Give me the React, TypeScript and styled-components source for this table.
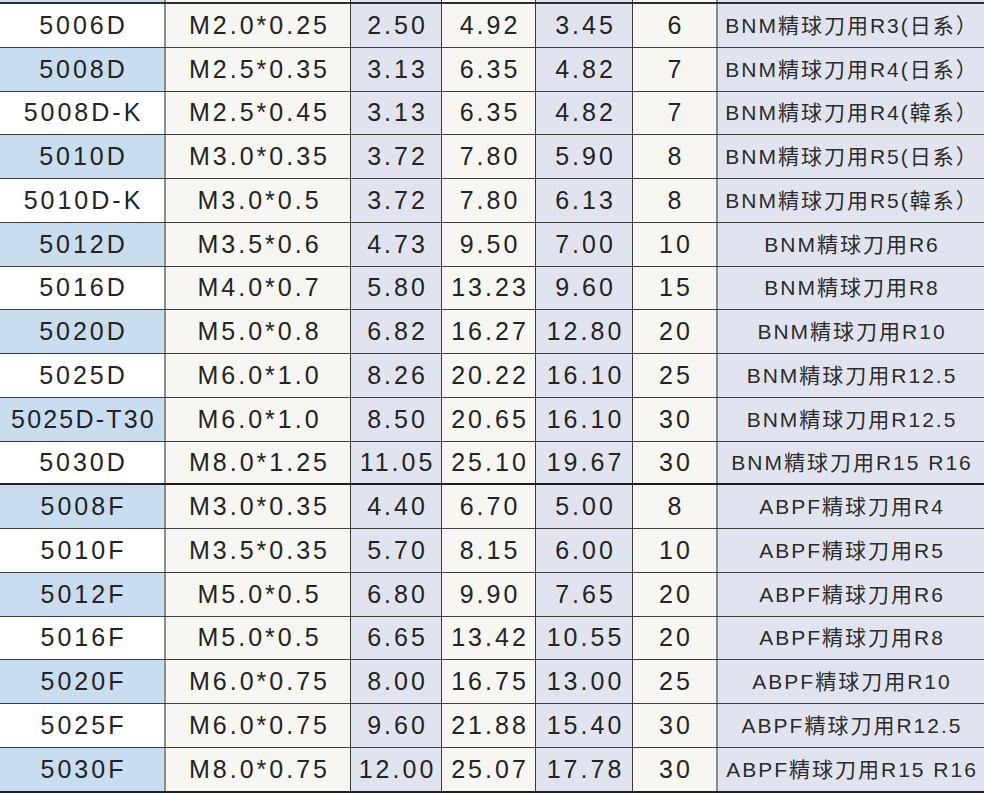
import React from "react";
import styled, { createGlobalStyle } from "styled-components";

const GlobalStyle = createGlobalStyle`
  html, body {
    margin: 0;
    padding: 0;
    background: #ffffff;
  }
  body {
    font-family: "Liberation Sans", Arial, "Noto Sans CJK TC", sans-serif;
  }
`;

type Kind = "model" | "light" | "tint" | "desc";

const COLUMNS = "164px 186px 91px 94px 97px 84px 268px";

const Sheet = styled.div`
  width: 984px;
  display: flex;
  flex-direction: column;
`;

const Body = styled.div`
  display: flex;
  flex-direction: column;
  border-top: 2px solid #2e2e2e;
`;

const Row = styled.div<{ $height: number; $border: "none" | "thin" | "thick" }>`
  display: grid;
  grid-template-columns: ${COLUMNS};
  box-sizing: border-box;
  height: ${(p) => p.$height}px;
  border-bottom: ${(p) =>
    p.$border === "none"
      ? "none"
      : p.$border === "thick"
      ? "2px solid #1f1f1f"
      : "1px solid #3e3e3e"};
`;

const background = (kind: Kind, blue: boolean) => {
  if (kind === "model") return blue ? "#c9ddf1" : "#ffffff";
  if (kind === "light") return "#f7f6f2";
  return "#e1e4ee";
};

const Cell = styled.div<{ $kind: Kind; $blue?: boolean; $edge: "none" | "gray" | "dark"; $tight?: boolean }>`
  display: flex;
  align-items: center;
  justify-content: center;
  box-sizing: border-box;
  min-width: 0;
  white-space: nowrap;
  background: ${(p) => background(p.$kind, !!p.$blue)};
  border-left: ${(p) =>
    p.$edge === "none" ? "none" : p.$edge === "gray" ? "2px solid #8c8c8c" : "1px solid #3a3a3a"};
  color: ${(p) => (p.$kind === "desc" ? "#2b2b2b" : "#232323")};
  font-family: "Liberation Sans", Arial, "Noto Sans CJK TC", sans-serif;
  font-size: ${(p) => (p.$kind === "desc" ? "21px" : "25px")};
  letter-spacing: ${(p) => (p.$kind === "desc" ? "2px" : p.$tight ? "2.2px" : "3px")};
  padding-left: ${(p) => (p.$kind === "desc" ? "2px" : "3px")};
  line-height: 1;
`;

type Item = [string, string, string, string, string, string, string];

const ROWS: Item[] = [
  ["5006D", "M2.0*0.25", "2.50", "4.92", "3.45", "6", "BNM精球刀用R3(日系）"],
  ["5008D", "M2.5*0.35", "3.13", "6.35", "4.82", "7", "BNM精球刀用R4(日系）"],
  ["5008D-K", "M2.5*0.45", "3.13", "6.35", "4.82", "7", "BNM精球刀用R4(韓系）"],
  ["5010D", "M3.0*0.35", "3.72", "7.80", "5.90", "8", "BNM精球刀用R5(日系）"],
  ["5010D-K", "M3.0*0.5", "3.72", "7.80", "6.13", "8", "BNM精球刀用R5(韓系）"],
  ["5012D", "M3.5*0.6", "4.73", "9.50", "7.00", "10", "BNM精球刀用R6"],
  ["5016D", "M4.0*0.7", "5.80", "13.23", "9.60", "15", "BNM精球刀用R8"],
  ["5020D", "M5.0*0.8", "6.82", "16.27", "12.80", "20", "BNM精球刀用R10"],
  ["5025D", "M6.0*1.0", "8.26", "20.22", "16.10", "25", "BNM精球刀用R12.5"],
  ["5025D-T30", "M6.0*1.0", "8.50", "20.65", "16.10", "30", "BNM精球刀用R12.5"],
  ["5030D", "M8.0*1.25", "11.05", "25.10", "19.67", "30", "BNM精球刀用R15 R16"],
  ["5008F", "M3.0*0.35", "4.40", "6.70", "5.00", "8", "ABPF精球刀用R4"],
  ["5010F", "M3.5*0.35", "5.70", "8.15", "6.00", "10", "ABPF精球刀用R5"],
  ["5012F", "M5.0*0.5", "6.80", "9.90", "7.65", "20", "ABPF精球刀用R6"],
  ["5016F", "M5.0*0.5", "6.65", "13.42", "10.55", "20", "ABPF精球刀用R8"],
  ["5020F", "M6.0*0.75", "8.00", "16.75", "13.00", "25", "ABPF精球刀用R10"],
  ["5025F", "M6.0*0.75", "9.60", "21.88", "15.40", "30", "ABPF精球刀用R12.5"],
  ["5030F", "M8.0*0.75", "12.00", "25.07", "17.78", "30", "ABPF精球刀用R15 R16"],
];

const KINDS: Kind[] = ["model", "light", "tint", "light", "tint", "light", "desc"];
const EDGES: ("none" | "gray" | "dark")[] = ["none", "gray", "dark", "dark", "dark", "dark", "gray"];

const RowCells: React.FC<{ values: string[]; blue: boolean }> = ({ values, blue }) => (
  <>
    {KINDS.map((kind, i) => (
      <Cell
        key={i}
        $kind={kind}
        $blue={blue}
        $edge={EDGES[i]}
        $tight={i === 0 && values[i].length > 7}
      >
        {values[i]}
      </Cell>
    ))}
  </>
);

export default function App() {
  const last = ROWS.length - 1;
  return (
    <>
      <GlobalStyle />
      <Sheet>
        <Row $height={2} $border="none">
          <RowCells values={["", "", "", "", "", "", ""]} blue={true} />
        </Row>
        <Body>
          {ROWS.map((r, i) => (
            <Row
              key={r[0]}
              $height={i === last ? 44.75 : 43.75}
              $border={i === last || r[0] === "5030D" ? "thick" : "thin"}
            >
              <RowCells values={r} blue={i % 2 === 1} />
            </Row>
          ))}
        </Body>
      </Sheet>
    </>
  );
}
